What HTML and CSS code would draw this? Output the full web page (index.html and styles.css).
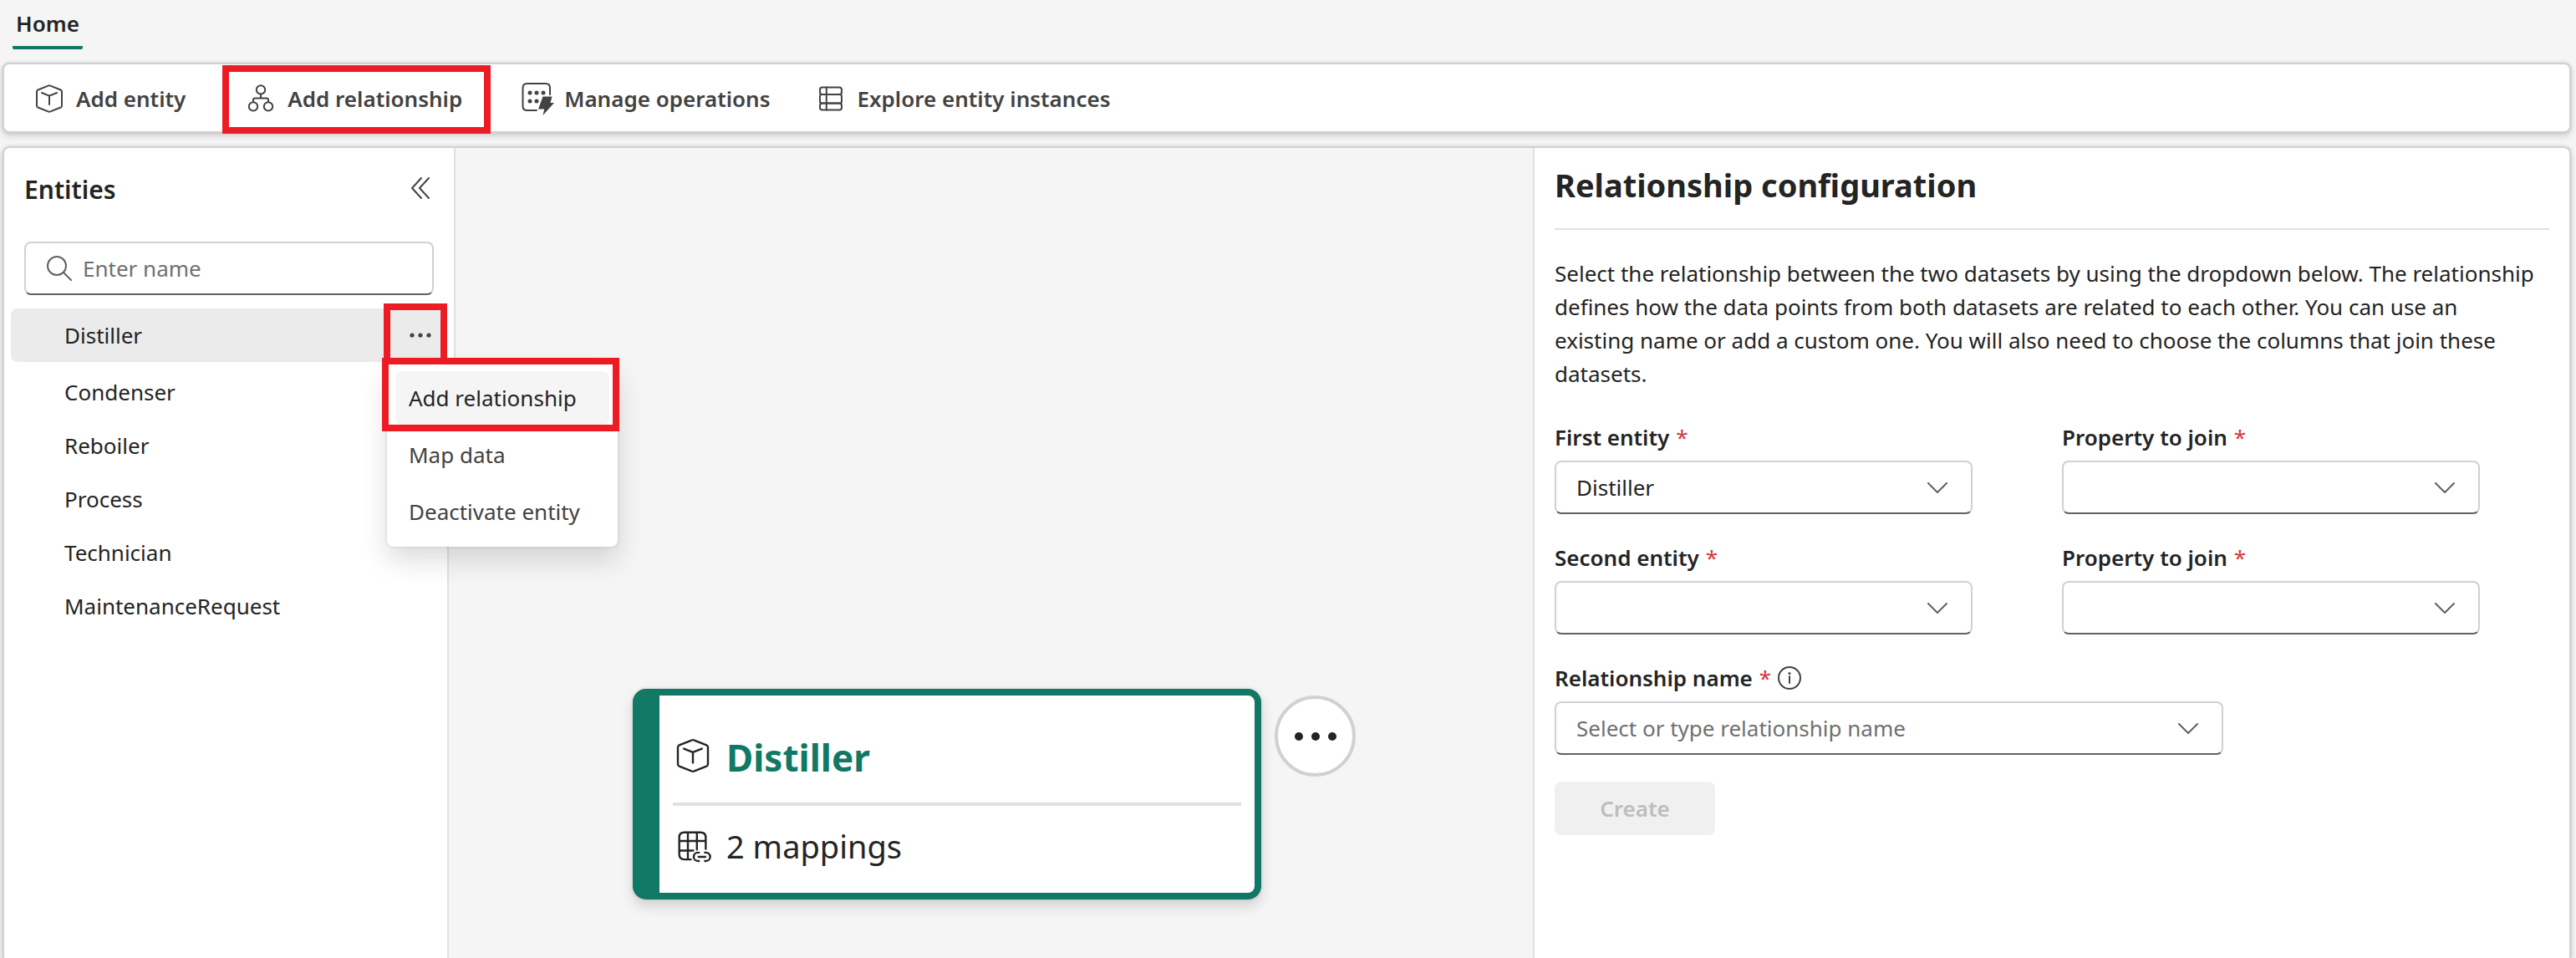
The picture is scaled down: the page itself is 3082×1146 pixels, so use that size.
FILE: index.html
```html
<!DOCTYPE html>
<html lang="en">
<head>
<meta charset="utf-8">
<title>Home</title>
<link rel="stylesheet" href="styles.css">
</head>
<body>
<svg class="sprite" aria-hidden="true">
  <symbol id="cube" viewBox="0 0 20 20"><path d="M9.3 2.3q.7-.3 1.4 0l6.100 2.450q.7.3.7 1v8.500q0 .7-.7 1l-6.100 2.450q-.7.3-1.400 0l-6.100-2.450q-.7-.3-.7-1v-8.500q0-.7.7-1z"/><path d="M5.500 6.500 10 8.300l4.500-1.800M10 8.300v5.200"/></symbol>
  <symbol id="network" viewBox="0 0 20 20"><circle cx="10" cy="4.700" r="2.600"/><circle cx="5.500" cy="14.700" r="2.600"/><circle cx="14.500" cy="14.700" r="2.600"/><path d="M10 7.300V9.700M5.500 12V10.700q0-1 1-1h7q1 0 1 1V12"/></symbol>
  <symbol id="operations" viewBox="0 0 40 40"><path stroke-width="2" d="M35 15V7q0-5-5-5H7.500Q2.500 2 2.500 7v22q0 5 5 5H19"/><g class="solid"><circle cx="11" cy="13" r="2.500"/><circle cx="19" cy="13" r="2.500"/><circle cx="27" cy="13" r="2.500"/><circle cx="11" cy="23" r="2.500"/><circle cx="19" cy="23" r="2.500"/><path d="M26.500 17.500h11l-2 7.500H40L26.500 40l1.700-7.500H21z"/></g></symbol>
  <symbol id="rows" viewBox="0 0 20 20"><rect x="3.500" y="3.300" width="13" height="4.200" rx="1.400"/><rect x="3.500" y="7.500" width="13" height="5.300" rx="1.200"/><rect x="3.500" y="12.800" width="13" height="4" rx="1.400"/><path d="M7.400 3.300v13.500"/></symbol>
</svg>
<header class="tabs"><a class="tab" href="#home">Home</a></header>
<div class="toolbar">
  <button class="tool"><svg class="icon"><use href="#cube"/></svg>Add entity</button>
  <button class="tool callout callout-tool"><svg class="icon"><use href="#network"/></svg>Add relationship</button>
  <button class="tool"><svg class="icon"><use href="#operations"/></svg>Manage operations</button>
  <button class="tool"><svg class="icon"><use href="#rows"/></svg>Explore entity instances</button>
</div>
<main class="workspace">
  <aside class="sidebar">
    <section class="sidebar-top">
      <div class="sidebar-head">
        <h2 class="sidebar-title">Entities</h2>
        <button class="collapse" aria-label="Collapse"><svg class="icon" viewBox="0 0 20 20"><path d="M10.500 4 5 10l5.500 6M15 4l-5.500 6 5.500 6"/></svg></button>
      </div>
      <div class="search">
        <svg class="icon" viewBox="0 0 20 20"><circle cx="8.500" cy="8.500" r="5.500"/><path d="m12.500 12.500 4.500 4.500"/></svg>
        <input class="search-input" type="search" aria-label="Enter name" placeholder="Enter name">
      </div>
      <div class="entity selected">
        <a class="entity-name" href="#distiller">Distiller</a>
        <button class="more callout callout-more" aria-label="More options"><svg class="icon solid" viewBox="0 0 20 20"><circle cx="5" cy="10" r="1.300"/><circle cx="10" cy="10" r="1.300"/><circle cx="15" cy="10" r="1.300"/></svg></button>
        <div class="menu" role="menu">
          <button class="menu-item active callout callout-menu" role="menuitem">Add relationship</button>
          <button class="menu-item" role="menuitem">Map data</button>
          <button class="menu-item" role="menuitem">Deactivate entity</button>
        </div>
      </div>
    </section>
    <section class="sidebar-list">
      <a class="entity" href="#condenser">Condenser</a>
      <a class="entity" href="#reboiler">Reboiler</a>
      <a class="entity" href="#process">Process</a>
      <a class="entity" href="#technician">Technician</a>
      <a class="entity" href="#maintenance">MaintenanceRequest</a>
    </section>
  </aside>
  <section class="canvas">
    <article class="node">
      <div class="node-head"><svg class="node-icon"><use href="#cube"/></svg><h3 class="node-title">Distiller</h3></div>
      <div class="node-body">
        <svg class="node-icon" viewBox="0 0 20 20"><path d="M9 16.700H5.700Q3.200 16.700 3.200 14.200V5.700Q3.200 3.200 5.700 3.200h8Q16.400 3.200 16.400 5.700V11.500M3.200 7.500h13.200M3.200 12.300h7M7.500 3.200v13.500M12 3.200v8.600"/><path d="M13 13.300h-.5a2.100 2.100 0 0 0 0 4.200h.5M16 13.300h.5a2.100 2.100 0 0 1 0 4.200H16M12.800 15.400h3.400"/></svg>
        <span>2 mappings</span>
      </div>
    </article>
    <button class="node-more" aria-label="Node options"><svg class="icon" viewBox="0 0 40 40"><g class="solid"><circle cx="0" cy="20" r="5"/><circle cx="20" cy="20" r="5"/><circle cx="40" cy="20" r="5"/></g></svg></button>
  </section>
  <section class="config">
    <h1 class="config-title">Relationship configuration</h1>
    <p class="config-text">Select the relationship between the two datasets by using the dropdown below. The relationship defines how the data points from both datasets are related to each other. You can use an existing name or add a custom one. You will also need to choose the columns that join these datasets.</p>
    <form class="form">
      <div class="field">
        <label class="label" for="first">First entity <span class="req">*</span></label>
        <div class="control"><select class="input" id="first"><option>Distiller</option></select><svg class="chevron" viewBox="0 0 24 14"><path d="m1 1 11 11L23 1"/></svg></div>
      </div>
      <div class="field">
        <label class="label" for="prop1">Property to join <span class="req">*</span></label>
        <div class="control"><select class="input" id="prop1"><option></option></select><svg class="chevron" viewBox="0 0 24 14"><path d="m1 1 11 11L23 1"/></svg></div>
      </div>
      <div class="field">
        <label class="label" for="second">Second entity <span class="req">*</span></label>
        <div class="control"><select class="input" id="second"><option></option></select><svg class="chevron" viewBox="0 0 24 14"><path d="m1 1 11 11L23 1"/></svg></div>
      </div>
      <div class="field">
        <label class="label" for="prop2">Property to join <span class="req">*</span></label>
        <div class="control"><select class="input" id="prop2"><option></option></select><svg class="chevron" viewBox="0 0 24 14"><path d="m1 1 11 11L23 1"/></svg></div>
      </div>
      <div class="field wide">
        <label class="label" for="relname">Relationship name <span class="req">*</span><svg class="info" viewBox="0 0 28 28"><circle cx="14" cy="14" r="13"/><path d="M14 12v8"/><circle class="solid" cx="14" cy="8.500" r="1.500"/></svg></label>
        <div class="control"><input class="input" id="relname" type="text" placeholder="Select or type relationship name"><svg class="chevron" viewBox="0 0 24 14"><path d="m1 1 11 11L23 1"/></svg></div>
      </div>
      <button class="create" type="button" disabled>Create</button>
    </form>
  </section>
</main>
</body>
</html>
```
FILE: styles.css
```css
* { box-sizing: border-box; }

body {
  margin: 0;
  min-height: 100vh;
  display: flex;
  flex-direction: column;
  gap: 16px;
  background: #f5f5f5;
  color: #242424;
  font: 26px/40px "Noto Sans", "Segoe UI", sans-serif;
  overflow-x: hidden;
}

button, input, select { font: inherit; color: inherit; }
button { border: 0; padding: 0; background: none; cursor: pointer; }
a { color: inherit; text-decoration: none; }
h1, h2, h3, p { margin: 0; }

svg { fill: none; stroke: currentColor; stroke-width: 1; stroke-linecap: round; stroke-linejoin: round; flex: none; }
.solid { fill: currentColor; stroke: none; }
.sprite { position: absolute; width: 0; height: 0; }
.icon { width: 40px; height: 40px; }

/* Tabs */
.tabs { height: 59px; padding: 0 15px; display: flex; }
.tab {
  padding: 8px 4px 0;
  border-bottom: 4px solid #117865;
  border-radius: 2px;
  font-weight: 600;
}

/* Toolbar */
.toolbar {
  position: relative;
  z-index: 2;
  height: 84px;
  margin: 0 6px 0 3px;
  padding: 0 16px;
  display: flex;
  align-items: center;
  gap: 28px;
  background: #fff;
  border: 2px solid #d1d1d1;
  border-radius: 8px;
  box-shadow: 0 0 4px rgba(0, 0, 0, .12), 0 4px 8px rgba(0, 0, 0, .14);
}
.tool {
  display: flex;
  align-items: center;
  gap: 12px;
  padding: 14px 24px 12px 18px;
  color: #424242;
  font-weight: 600;
}
.tool:last-child { padding-left: 0; }

/* Red highlight frames */
.callout { position: relative; }
.callout::after {
  content: "";
  position: absolute;
  border: 8px solid #ed1c24;
  pointer-events: none;
}
.callout-tool::after { inset: -6px -10px -10px -8px; }
.callout-more::after { inset: -6px -8px -8px; }
.callout-menu::after { inset: -16px -12px -8px -16px; }

/* Workspace */
.workspace {
  flex: 1;
  display: flex;
  margin: 0 6px 0 3px;
  border: 2px solid #d1d1d1;
  border-bottom: 0;
  border-radius: 8px 8px 0 0;
  box-shadow: 0 0 4px rgba(0, 0, 0, .12), 0 4px 8px rgba(0, 0, 0, .14);
}

/* Sidebar */
.sidebar { flex: 0 0 540px; display: flex; flex-direction: column; }
.sidebar-top { padding: 24px 8px 0; background: #fff; border-right: 2px solid #e0e0e0; border-radius: 8px 0 0 0; }
.sidebar-head { display: flex; align-items: center; justify-content: space-between; padding: 4px 12px 4px 16px; }
.sidebar-title { padding-top: 4px; font-size: 30px; font-weight: 600; line-height: 36px; }
.collapse { height: 40px; color: #424242; }
.search {
  display: flex;
  align-items: center;
  gap: 8px;
  height: 64px;
  margin: 40px 16px 16px;
  padding: 0 20px;
  border: 2px solid #d1d1d1;
  border-bottom-color: #616161;
  border-radius: 8px;
  color: #616161;
}
.search-input { flex: 1; min-width: 0; padding: 0; border: 0; outline: 0; background: none; }
::placeholder { color: #707070; opacity: 1; }
.entity { display: flex; align-items: center; height: 64px; padding-left: 64px; }
.selected { position: relative; justify-content: space-between; margin-right: 8px; background: #ebebeb; border-radius: 8px; }
.more { display: flex; align-items: center; width: 60px; height: 64px; padding-left: 16px; color: #424242; }
.sidebar-list { flex: 1; width: 532px; padding: 4px 8px; background: #fff; border-right: 2px solid #e0e0e0; }

/* Context menu */
.menu {
  position: absolute;
  z-index: 3;
  top: 65px;
  left: 450px;
  width: 276px;
  padding: 10px;
  display: flex;
  flex-direction: column;
  gap: 4px;
  background: #fff;
  border-radius: 8px;
  box-shadow: 0 0 4px rgba(0, 0, 0, .12), 0 16px 32px rgba(0, 0, 0, .14);
}
.menu-item { height: 64px; padding: 0 16px; border-radius: 8px; color: #424242; text-align: left; white-space: nowrap; }
.active { background: #f5f5f5; color: #242424; }

/* Canvas */
.canvas { position: relative; flex: 1; }
.node {
  position: absolute;
  top: 647px;
  left: 212px;
  width: 752px;
  height: 252px;
  padding: 16px;
  background: #fff;
  border: 8px solid #117865;
  border-left-width: 32px;
  border-radius: 16px;
  box-shadow: 0 0 4px rgba(0, 0, 0, .12), 0 8px 16px rgba(0, 0, 0, .14);
}
.node-head, .node-body { display: flex; align-items: center; gap: 16px; }
.node-head { height: 116px; border-bottom: 4px solid #e0e0e0; }
.node-body { height: 96px; font-size: 38px; }
.node-icon { width: 48px; height: 48px; }
.node-title { padding-top: 4px; color: #117865; font-size: 44px; font-weight: 700; }
.node-more {
  position: absolute;
  top: 655px;
  left: 980px;
  width: 97px;
  height: 97px;
  display: grid;
  place-items: center;
  border: 4px solid #d1d1d1;
  border-radius: 50%;
  background: #fff;
}
.node-more .icon { overflow: visible; }

/* Configuration panel */
.config {
  flex: 0 1 1240px;
  padding: 20px 24px;
  background: #fff;
  border-left: 2px solid #e0e0e0;
  border-radius: 0 8px 0 0;
}
.config-title { height: 78px; padding-top: 4px; border-bottom: 2px solid #e0e0e0; font-size: 38px; font-weight: 700; }
.config-text { padding: 32px 12px 36px 0; }
.form { display: grid; grid-template-columns: repeat(2, minmax(0, 500px)); gap: 32px 107px; }
.label { display: flex; align-items: center; gap: 8px; height: 40px; margin-bottom: 8px; font-weight: 600; }
.req { color: #d13438; font-weight: 400; }
.wide { grid-column: 1 / -1; max-width: 800px; }
.control { position: relative; }
.input {
  display: block;
  width: 100%;
  height: 64px;
  padding: 0 24px;
  appearance: none;
  background: #fff;
  border: 2px solid #d1d1d1;
  border-bottom-color: #616161;
  border-radius: 8px;
}
.chevron { position: absolute; right: 30px; top: 26px; width: 24px; height: 14px; color: #616161; stroke-width: 2; pointer-events: none; }
.info { width: 28px; height: 28px; color: #424242; stroke-width: 2; }
.create { width: 192px; height: 64px; border-radius: 8px; background: #f0f0f0; color: #bdbdbd; font-weight: 600; }
```
